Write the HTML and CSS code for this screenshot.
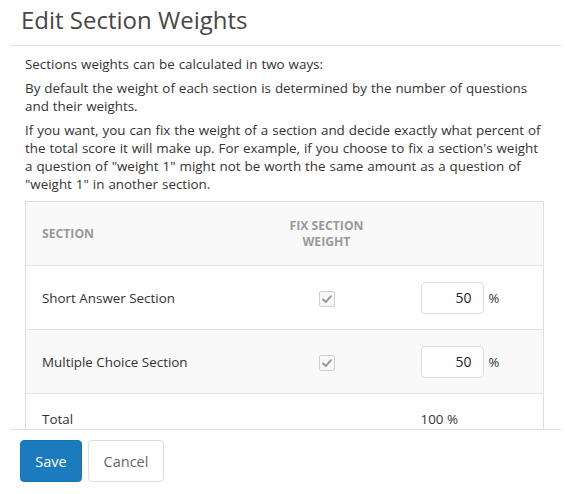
FILE: index.html
```html
<!DOCTYPE html>
<html>
<head>
<meta charset="utf-8">
<link rel="stylesheet" href="styles.css">
</head>
<body>
<div class="modal">
  <div class="modal-header">
    <h1 class="modal-title">Edit Section Weights</h1>
  </div>
  <div class="modal-body">
    <p>Sections weights can be calculated in two ways:</p>
    <p>By default the weight of each section is determined by the number of questions and their weights.</p>
    <p>If you want, you can fix the weight of a section and decide exactly what percent of the total score it will make up. For example, if you choose to fix a section's weight a question of "weight 1" might not be worth the same amount as a question of "weight 1" in another section.</p>
    <table class="weights">
      <thead>
        <tr>
          <th class="col-section">Section</th>
          <th class="col-fix">Fix Section<br>Weight</th>
          <th class="col-weight"></th>
        </tr>
      </thead>
      <tbody>
        <tr>
          <td class="col-section">Short Answer Section</td>
          <td class="col-fix"><span class="check"><svg viewBox="0 0 16 16" width="16" height="16"><path d="M4 8.4 L6.8 11 L12 5.2" fill="none" stroke="#9a9a9a" stroke-width="2" stroke-linecap="round" stroke-linejoin="round"/></svg></span></td>
          <td class="col-weight"><span class="num-input">50</span><span class="pct">%</span></td>
        </tr>
        <tr class="alt">
          <td class="col-section">Multiple Choice Section</td>
          <td class="col-fix"><span class="check"><svg viewBox="0 0 16 16" width="16" height="16"><path d="M4 8.4 L6.8 11 L12 5.2" fill="none" stroke="#9a9a9a" stroke-width="2" stroke-linecap="round" stroke-linejoin="round"/></svg></span></td>
          <td class="col-weight"><span class="num-input">50</span><span class="pct">%</span></td>
        </tr>
        <tr class="total">
          <td class="col-section">Total</td>
          <td class="col-fix"></td>
          <td class="col-weight">100 %</td>
        </tr>
      </tbody>
    </table>
  </div>
  <div class="modal-footer">
    <button class="btn btn-primary">Save</button>
    <button class="btn btn-default">Cancel</button>
  </div>
</div>
</body>
</html>
```
FILE: styles.css
```css
* { box-sizing: border-box; }
html, body { margin: 0; padding: 0; background: #fff; }
body {
  font-family: "Open Sans", "Liberation Sans", sans-serif;
  color: #333;
  width: 565px;
  height: 494px;
  overflow: hidden;
}
.modal {
  margin-left: 11px;
  width: 550px;
}
.modal-header {
  height: 46px;
  border-bottom: 1px solid #dcdcdc;
  padding: 4px 0 0 10px;
}
.modal-title {
  margin: 0;
  font-size: 24px;
  font-weight: 400;
  line-height: 32px;
  color: #474747;
}
.modal-body {
  height: 383px;
  overflow: hidden;
  padding: 9px 12px 0 14px;
}
.modal-body p {
  margin: 0 0 6px 0;
  font-size: 13.4px;
  word-spacing: 0.5px;
  line-height: 18px;
  color: #333;
}
.weights {
  margin-top: 8px;
  width: 519px;
  border-collapse: collapse;
  border: 1px solid #dedede;
  border-bottom: none;
  font-size: 13.4px;
}
.weights th {
  background: #f9f9f9;
  color: #999;
  font-size: 12.2px;
  font-weight: 700;
  text-transform: uppercase;
  line-height: 16px;
  height: 64px;
  vertical-align: middle;
  border-bottom: 1px solid #e3e3e3;
}
.weights td {
  height: 64px;
  vertical-align: middle;
  border-bottom: 1px solid #e3e3e3;
  color: #333;
  line-height: 18px;
}
.weights tr.alt td { background: #f9f9f9; }
.weights tr.total td {
  vertical-align: top;
  padding-top: 16px;
  border-bottom: none;
}
.col-section {
  width: 214px;
  text-align: left;
  padding-left: 16px;
}
.col-fix {
  width: 174px;
  text-align: center;
}
.col-weight {
  text-align: left;
  padding-left: 7px;
}
.check {
  display: inline-block;
  width: 16px;
  height: 16px;
  border: 1px solid #cfcfcf;
  border-radius: 2px;
  background: #f7f7f7;
  vertical-align: middle;
}
.check svg {
  display: block;
  margin: -1px 0 0 -1px;
}
.num-input {
  display: inline-block;
  width: 63px;
  height: 32px;
  border: 1px solid #dcdcdc;
  border-radius: 4px;
  background: #fff;
  text-align: right;
  padding-right: 11px;
  font-size: 14px;
  line-height: 30px;
  color: #222;
  vertical-align: middle;
}
.pct {
  display: inline-block;
  margin-left: 5px;
  font-size: 13px;
  vertical-align: middle;
}
.modal-footer {
  border-top: 1px solid #dcdcdc;
  padding: 10px 0 0 9px;
  display: flex;
  gap: 6px;
}
.btn {
  font-family: "Open Sans", "Liberation Sans", sans-serif;
  font-size: 14.5px;
  height: 42px;
  border-radius: 4px;
  padding: 0;
  cursor: pointer;
}
.btn-primary {
  width: 62px;
  background: #1b7bbd;
  border: 1px solid #1873b2;
  color: #fff;
}
.btn-default {
  width: 76px;
  background: #fff;
  border: 1px solid #dedede;
  color: #666;
}
```
